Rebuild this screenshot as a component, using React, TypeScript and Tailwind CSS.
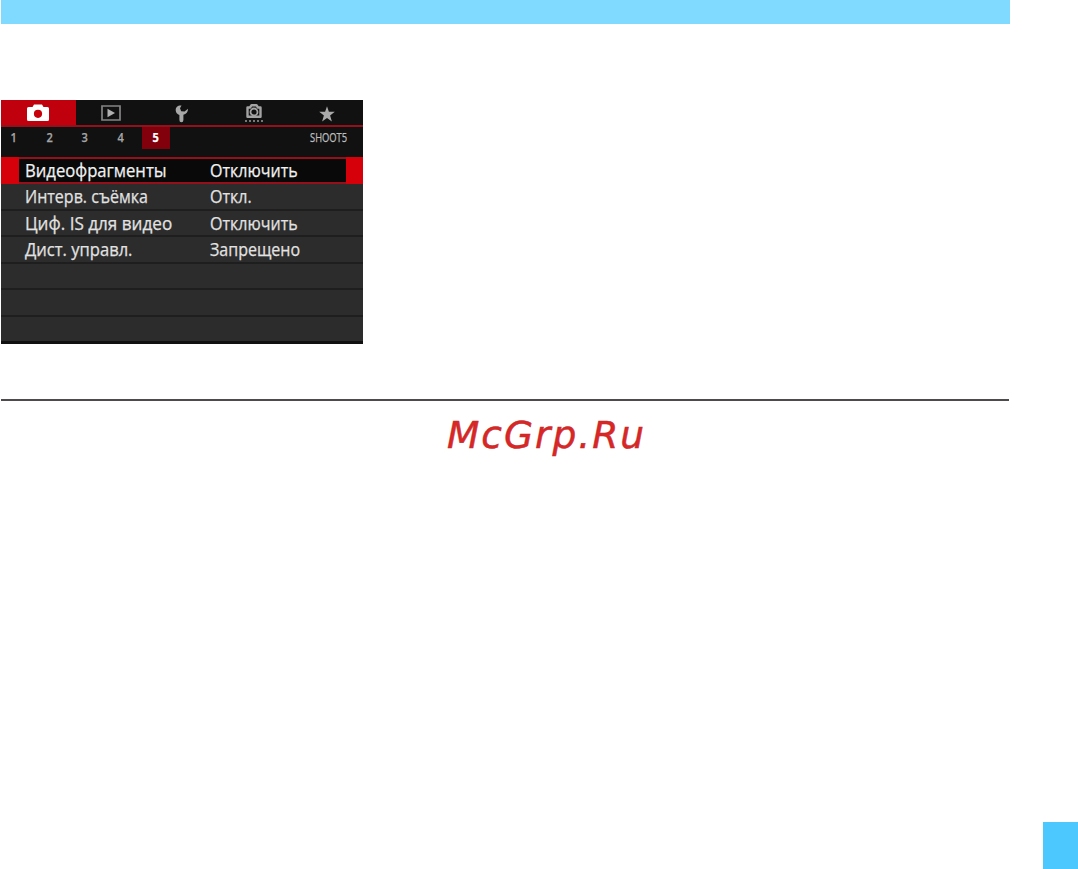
const TABS = ['1', '2', '3', '4', '5'];

const MENU_ROWS = [
  { label: 'Интерв. съёмка', value: 'Откл.', labelScale: 'scale-x-[0.89]' },
  { label: 'Циф. IS для видео', value: 'Отключить', labelScale: 'scale-x-[0.95]' },
  { label: 'Дист. управл.', value: 'Запрещено', labelScale: 'scale-x-[0.92]' },
  { label: '', value: '', labelScale: '' },
  { label: '', value: '', labelScale: '' },
  { label: '', value: '', labelScale: '' },
];

function CameraIcon() {
  return (
    <svg width="24" height="18" viewBox="0 0 24 18" fill="none">
      <path
        d="M2.5 3H6.5L8 .5H16L17.5 3H21.5Q23 3 23 4.5V15.5Q23 17 21.5 17H2.5Q1 17 1 15.5V4.5Q1 3 2.5 3Z"
        fill="#fff"
      />
      <circle cx="12" cy="9.8" r="4.1" fill="#c8000b" />
    </svg>
  );
}

function PlaybackIcon() {
  return (
    <svg width="20" height="16" viewBox="0 0 20 16" fill="none">
      <path d="M1 1H19V15H1Z" stroke="#858585" strokeWidth="1.7" />
      <path d="M6.5 3.8V12.2L14 8Z" fill="#b0b0b0" />
    </svg>
  );
}

function WrenchIcon() {
  return (
    <svg width="14" height="18" viewBox="0 0 14 18">
      <path
        d="M6.5.6C3 .2.6 2.2.7 5.2.8 7.6 2.3 9.4 4.4 9.9V15Q4.4 17.2 6.4 17.2T8.4 15V9.8C11.2 9.2 13.1 7 13 3.8L9.6 6.6 6.2 6.2 5 3.3Z"
        fill="#a8a8a8"
      />
    </svg>
  );
}

function CustomCameraIcon() {
  return (
    <svg width="18" height="20" viewBox="0 0 18 20" fill="none">
      <path
        d="M2.5 3.5H5L6.5 1.3H11.5L13 3.5H15.5V12.8H2.5Z"
        stroke="#a3a3a3"
        strokeWidth="2.4"
        strokeLinejoin="round"
      />
      <circle cx="9" cy="8" r="3.5" stroke="#a3a3a3" strokeWidth="1.8" />
      <path d="M0 17H18" stroke="#777" strokeWidth="2.2" strokeDasharray="2 2" />
    </svg>
  );
}

function StarIcon() {
  return (
    <svg width="16" height="16" viewBox="0 0 16 16">
      <path d="M8 .3 9.9 5.8H15.8L11.1 9.4 12.9 15.5 8 11.9 3.1 15.5 4.9 9.4.2 5.8H6.1Z" fill="#aaa" />
    </svg>
  );
}

function CameraMenu() {
  return (
    <div className="mt-[76px] ml-px flex h-[244px] w-[362px] flex-col bg-[#111] font-['Open_Sans',sans-serif] text-[#e2e2e2] [-webkit-text-stroke:0.25px_currentColor]">
      <div className="flex h-[25px] shrink-0 items-center">
        <div className="flex h-full w-[75px] items-center justify-center bg-[#c0000c] pr-0.5">
          <CameraIcon />
        </div>
        <div className="flex w-[71px] justify-center pr-px">
          <PlaybackIcon />
        </div>
        <div className="flex w-[70px] justify-center pt-0.5">
          <WrenchIcon />
        </div>
        <div className="flex w-[73px] justify-center pt-0.5">
          <CustomCameraIcon />
        </div>
        <div className="flex w-[73px] justify-center pt-0.5">
          <StarIcon />
        </div>
      </div>
      <div className="h-0.5 shrink-0 bg-[#94101a]" />

      <div className="flex h-[30px] shrink-0 items-start text-[13px] leading-[21px]">
        <div className="-ml-[5px] flex">
          {TABS.map((tab) => (
            <div key={tab} className="flex w-[35.5px] justify-center">
              {tab === '5' ? (
                <span className="h-[22px] w-7 bg-[#82000c] text-center font-bold text-white">
                  <span className="inline-block scale-x-[0.85]">{tab}</span>
                </span>
              ) : (
                <span className="inline-block scale-x-[0.85] font-semibold text-[#a5a5a5]">{tab}</span>
              )}
            </div>
          ))}
        </div>
        <span className="mr-4 ml-auto w-[37px] text-xs leading-[22px] font-medium whitespace-nowrap text-[#bdbdbd]">
          <span className="inline-block origin-left scale-x-[0.78]">SHOOT5</span>
        </span>
      </div>

      <div className="flex h-[27px] shrink-0 bg-[#d6000b] pr-[17px] pl-[18px]">
        <div className="flex w-full items-center border-y-2 border-[#94101a] bg-[#090909] pb-0.5 pl-[6px] text-lg leading-none font-medium text-[#f1f1f1]">
          <span className="w-[185px] whitespace-nowrap">
            <span className="inline-block origin-left scale-x-[0.925]">Видеофрагменты</span>
          </span>
          <span className="inline-block origin-left scale-x-[0.89]">Отключить</span>
        </div>
      </div>

      <div className="flex flex-1 flex-col border-b-[3px] border-[#111] bg-[#2c2c2c]">
        {MENU_ROWS.map((row, i) => (
          <div
            key={i}
            className="flex flex-1 items-center border-b-2 border-[#1e1e1e] pl-6 text-lg leading-none font-medium last:border-b-0"
          >
            <span className="w-[185px] whitespace-nowrap">
              <span className={`inline-block origin-left ${row.labelScale}`}>{row.label}</span>
            </span>
            <span className="inline-block origin-left scale-x-[0.89]">{row.value}</span>
          </div>
        ))}
      </div>
    </div>
  );
}

export default function App() {
  return (
    <div className="flex h-[869px] w-[1078px] flex-col overflow-hidden bg-white">
      <div className="ml-px h-6 w-[1009px] shrink-0 bg-[#80d9ff]" />
      <CameraMenu />
      <div className="mt-[55px] ml-px h-0.5 w-[1008px] bg-[#4d4b4c]" />
      <div className="mt-3 ml-[447px] font-['DejaVu_Sans',sans-serif] text-[37.5px] leading-[44px] tracking-[2px] text-[#dc2626] italic [-webkit-text-stroke:0.5px_#b92c2c]">
        McGrp.Ru
      </div>
      <div className="mt-auto ml-auto h-[47px] w-[35px] bg-[#4dc8ff]" />
    </div>
  );
}
